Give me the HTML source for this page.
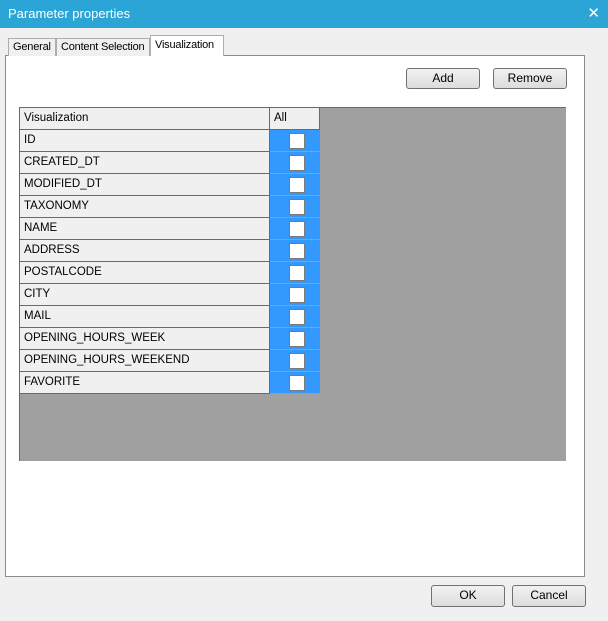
<!DOCTYPE html>
<html><head><style>
*{margin:0;padding:0;box-sizing:border-box}
body{width:608px;height:621px;background:#f0f0f0;font-family:"Liberation Sans",Tahoma,sans-serif;font-size:12px;color:#000;position:relative;overflow:hidden}
.title{position:absolute;left:0;top:0;width:608px;height:28px;background:#2ba4d6;color:#fff;font-size:13px;line-height:28px;padding-left:8px}
.x{position:absolute;right:8px;top:0;font-size:15px}
.tab{position:absolute;top:38px;height:18px;border:1px solid #adadad;border-bottom:none;background:#f0f0f0;line-height:16px;padding-left:4px;font-size:11px;white-space:nowrap;overflow:hidden;letter-spacing:-0.2px}
.panel{position:absolute;left:5px;top:55px;width:580px;height:522px;background:#fff;border:1px solid #8c8c8c}
.btn{position:absolute;height:21px;border:1px solid #707070;border-radius:3px;background:linear-gradient(#f2f2f2,#dcdcdc);text-align:center;line-height:19px;font-size:12px}
.grid{position:absolute;left:19px;top:107px;width:547px;height:354px;background:#a0a0a0;border-left:1px solid #6a6a6a;border-top:1px solid #6a6a6a}
.row{position:absolute;left:0;height:22px;width:300px}
.c1{position:absolute;left:0;top:0;width:250px;height:22px;background:#f0f0f0;border-right:1px solid #6a6a6a;border-bottom:1px solid #6a6a6a;padding-left:4px;line-height:21px;font-size:11.5px}
.c2{position:absolute;left:250px;top:0;width:50px;height:22px;background:#3399ff;border-bottom:1px solid #6aa9e8}
.cb{position:absolute;left:19px;top:3px;width:16px;height:16px;background:#fff;border:1px solid #7a7a7a}
</style></head><body>
<div class="title">Parameter properties<span class="x">✕</span></div>
<div class="panel"></div>
<div class="tab" style="left:8px;width:48px;">General</div>
<div class="tab" style="left:56px;width:94px;">Content Selection</div>
<div class="tab" style="left:150px;top:35px;height:21px;width:74px;background:#fff;line-height:19px;">Visualization</div>
<div class="btn" style="left:406px;top:68px;width:74px">Add</div>
<div class="btn" style="left:493px;top:68px;width:74px">Remove</div>
<div class="grid">
<div class="row" style="top:0"><div class="c1">Visualization</div><div class="c1" style="left:250px;width:50px;">All</div></div>
<div class="row" style="top:22px"><div class="c1">ID</div><div class="c2"><div class="cb"></div></div></div>
<div class="row" style="top:44px"><div class="c1">CREATED_DT</div><div class="c2"><div class="cb"></div></div></div>
<div class="row" style="top:66px"><div class="c1">MODIFIED_DT</div><div class="c2"><div class="cb"></div></div></div>
<div class="row" style="top:88px"><div class="c1">TAXONOMY</div><div class="c2"><div class="cb"></div></div></div>
<div class="row" style="top:110px"><div class="c1">NAME</div><div class="c2"><div class="cb"></div></div></div>
<div class="row" style="top:132px"><div class="c1">ADDRESS</div><div class="c2"><div class="cb"></div></div></div>
<div class="row" style="top:154px"><div class="c1">POSTALCODE</div><div class="c2"><div class="cb"></div></div></div>
<div class="row" style="top:176px"><div class="c1">CITY</div><div class="c2"><div class="cb"></div></div></div>
<div class="row" style="top:198px"><div class="c1">MAIL</div><div class="c2"><div class="cb"></div></div></div>
<div class="row" style="top:220px"><div class="c1">OPENING_HOURS_WEEK</div><div class="c2"><div class="cb"></div></div></div>
<div class="row" style="top:242px"><div class="c1">OPENING_HOURS_WEEKEND</div><div class="c2"><div class="cb"></div></div></div>
<div class="row" style="top:264px"><div class="c1">FAVORITE</div><div class="c2"><div class="cb"></div></div></div>
</div>
<div class="btn" style="left:431px;top:585px;width:74px;height:22px">OK</div>
<div class="btn" style="left:512px;top:585px;width:74px;height:22px">Cancel</div>
</body></html>
